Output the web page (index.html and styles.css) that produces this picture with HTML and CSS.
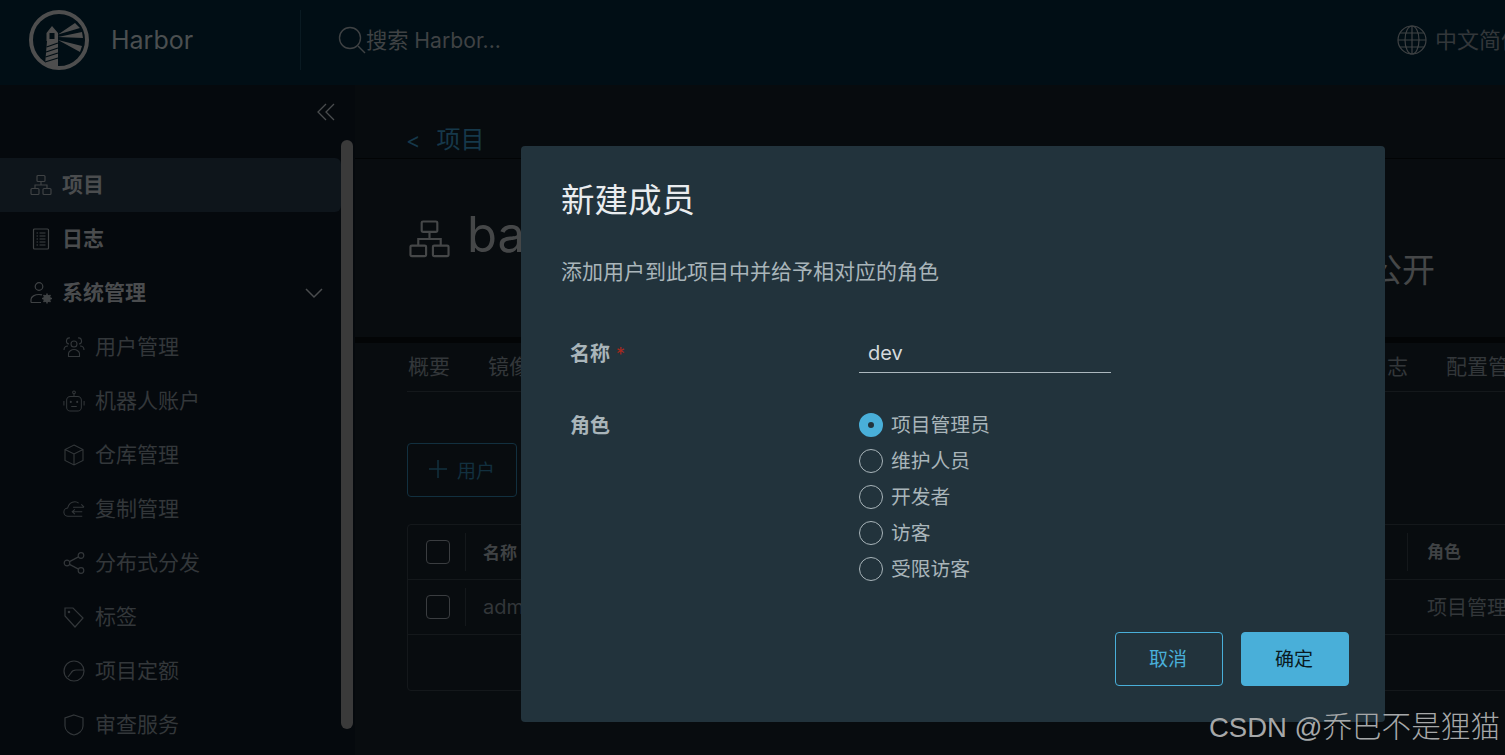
FILE: index.html
```html
<!DOCTYPE html>
<html lang="zh-CN">
<head>
<meta charset="utf-8">
<title>Harbor</title>
<link rel="stylesheet" href="styles.css">
</head>
<body>
<div class="app">
  <header class="topbar">
    <svg class="logo" viewBox="0 0 60 60" fill="none">
      <circle cx="30" cy="30" r="28" stroke="#4e4e4e" stroke-width="4"/>
      <path d="M16 55l2-24h-.500v-8L23 16l6 7v34z" fill="#4e4e4e"/>
      <path d="M20.500 23h5v6h-5z" fill="#010d13"/>
      <path d="M17.500 37L29 33M17 42l12-4M16.500 47l12.500-4M16 52l13-4" stroke="#010d13" stroke-width="1.300"/>
      <path d="M29 24.500L46 13l5 5zM29 27l24-5 1 6zM29 30l24 6-2 6z" fill="#4e4e4e"/>
    </svg>
    <span class="brand">Harbor</span>
    <span class="top-divider"></span>
    <svg class="search-icon" viewBox="0 0 28 28" fill="none" stroke="#3f4244" stroke-width="1.400">
      <circle cx="12" cy="12" r="10.500"/><path d="M20 20l7 7"/>
    </svg>
    <span class="search-text">搜索 Harbor...</span>
    <div class="lang">
      <svg class="globe" viewBox="0 0 30 30" fill="none" stroke="#3f4244" stroke-width="1.200">
        <circle cx="15" cy="15" r="14"/><ellipse cx="15" cy="15" rx="7" ry="14"/><path d="M15 1v28M3 8h24M1 15h28M3 22h24"/>
      </svg>
      <span>中文简体</span>
    </div>
  </header>
  <div class="body">
    <aside class="sidebar">
      <div class="collapse">
        <svg class="collapse-icon" viewBox="0 0 18 18" fill="none" stroke="#4a4c4e" stroke-width="1.300">
          <path d="M9 1L1 9l8 8M17 1L9 9l8 8"/>
        </svg>
      </div>
      <nav class="nav">
        <a class="nav-item main-item active">
          <svg class="icon" viewBox="0 0 22 22" fill="none" stroke="currentColor" stroke-width="1.200"><rect x="7" y="1.500" width="8" height="6" rx="1"/><rect x="1" y="14.500" width="8" height="6" rx="1"/><rect x="13" y="14.500" width="8" height="6" rx="1"/><path d="M11 7.500v3.500M5 14.500V11h12v3.500"/></svg>
          <span>项目</span>
        </a>
        <a class="nav-item main-item">
          <svg class="icon" viewBox="0 0 22 22" fill="none" stroke="currentColor" stroke-width="1.200"><rect x="3.500" y="1" width="15" height="20" rx="1"/><path d="M6.500 5h1.500M9.500 5h6M6.500 8h1.500M9.500 8h6M6.500 11h1.500M9.500 11h6M6.500 14h1.500M9.500 14h6M6.500 17h1.500M9.500 17h6"/></svg>
          <span>日志</span>
        </a>
        <a class="nav-item main-item">
          <svg class="icon" viewBox="0 0 22 22" fill="none" stroke="currentColor" stroke-width="1.200"><circle cx="9" cy="4.500" r="3.800"/><path d="M1 20.500v-3c0-3 4-5 8-5 1 0 2 0 3 .4M1 20.500h10"/><circle cx="17" cy="16.500" r="2.500" stroke-width="2.600"/><path d="M17 11.500v10M12 16.500h10M13.500 13l7 7M20.500 13l-7 7" stroke-width="1.500"/></svg>
          <span>系统管理</span>
          <svg class="chevron" viewBox="0 0 18 12" fill="none" stroke="#4a4c4e" stroke-width="1.500"><path d="M1 2l8 8 8-8"/></svg>
        </a>
        <a class="nav-item sub-item">
          <svg class="icon" viewBox="0 0 22 22" fill="none" stroke="currentColor" stroke-width="1.100"><circle cx="11" cy="8" r="3"/><path d="M5.500 20.500v-3c0-2 3-4 5.500-4s5.500 2 5.500 4v3z"/><path d="M6 8a3 3 0 1 1 1-6M16 8a3 3 0 1 0-1-6M1 14c0-2 1-4 4-4M21 14c0-2-1-4-4-4"/></svg>
          <span>用户管理</span>
        </a>
        <a class="nav-item sub-item">
          <svg class="icon" viewBox="0 0 24 24" fill="none" stroke="currentColor" stroke-width="1.100"><rect x="4" y="7" width="16" height="16" rx="4"/><circle cx="12" cy="2.500" r="1.500"/><path d="M12 4v3M9 18h6M1 12v5M23 12v5"/><circle cx="8.500" cy="13" r=".6"/><circle cx="15.500" cy="13" r=".6"/></svg>
          <span>机器人账户</span>
        </a>
        <a class="nav-item sub-item">
          <svg class="icon" viewBox="0 0 22 22" fill="none" stroke="currentColor" stroke-width="1.100"><path d="M11 1l9 4.500v11L11 21l-9-4.500v-11zM2 5.500l9 4.500 9-4.500M11 10v11"/></svg>
          <span>仓库管理</span>
        </a>
        <a class="nav-item sub-item">
          <svg class="icon" viewBox="0 0 24 22" fill="none" stroke="currentColor" stroke-width="1.100"><path d="M21 19H6a4.500 4.500 0 0 1-1-9c1-4 4-7 8-7 2 0 3 .5 4 1.500M11 9h12M20 6l3 3M10 14h11M13 11.500L10 14l3 2.500"/></svg>
          <span>复制管理</span>
        </a>
        <a class="nav-item sub-item">
          <svg class="icon" viewBox="0 0 22 22" fill="none" stroke="currentColor" stroke-width="1.200"><circle cx="4" cy="11" r="2.800"/><circle cx="18" cy="3.500" r="2.800"/><circle cx="18" cy="18.500" r="2.800"/><path d="M6.500 9.600l9-4.700M6.500 12.400l9 4.700"/></svg>
          <span>分布式分发</span>
        </a>
        <a class="nav-item sub-item">
          <svg class="icon" viewBox="0 0 22 22" fill="none" stroke="currentColor" stroke-width="1.200"><path d="M2 2h8l10 10-8 9L2 10z"/><circle cx="6" cy="6" r=".7"/></svg>
          <span>标签</span>
        </a>
        <a class="nav-item sub-item">
          <svg class="icon" viewBox="0 0 22 22" fill="none" stroke="currentColor" stroke-width="1.200"><circle cx="11" cy="11" r="10"/><path d="M21 10h-8c-3 0-4 1-5 3l-3 4"/></svg>
          <span>项目定额</span>
        </a>
        <a class="nav-item sub-item">
          <svg class="icon" viewBox="0 0 22 22" fill="none" stroke="currentColor" stroke-width="1.200"><path d="M11 1l9 3v8c0 5-5 8-9 9-4-1-9-4-9-9V4z"/></svg>
          <span>审查服务</span>
        </a>
      </nav>
      <div class="scrollbar"></div>
    </aside>
    <main class="main">
      <div class="crumb"><span class="crumb-arrow">&lt;</span><span>项目</span></div>
      <section class="card">
        <div class="project-title">
          <svg class="project-icon" viewBox="0 0 42 40" preserveAspectRatio="none" fill="none" stroke="#454748" stroke-width="2.200"><rect x="13" y="1.500" width="16" height="11" rx="1.500"/><rect x="1.500" y="27" width="16" height="11" rx="1.500"/><rect x="24.500" y="27" width="16" height="11" rx="1.500"/><path d="M21 12.500V20M9.500 27v-7h23v7"/></svg>
          <span>ba</span>
        </div>
        <span class="visibility">公开</span>
      </section>
      <div class="tabs-band">
        <div class="tabs">
          <span>概要</span><span>镜像仓库</span><span class="tab-push">日志</span><span>配置管理</span>
        </div>
        <button class="add-btn" type="button">
          <svg class="plus" viewBox="0 0 18 18" fill="none" stroke="#12303f" stroke-width="1.500"><path d="M9 0v18M0 9h18"/></svg>
          <span>用户</span>
        </button>
        <div class="table">
          <div class="row head-row">
            <span class="check-cell"><i class="check"></i></span>
            <strong class="name-cell">名称</strong>
            <strong class="role-cell">角色</strong>
          </div>
          <div class="row body-row">
            <span class="check-cell"><i class="check"></i></span>
            <span class="name-cell">admin</span>
            <span class="role-cell plain">项目管理员</span>
          </div>
          <div class="table-foot"></div>
        </div>
      </div>
    </main>
  </div>
</div>

<div class="modal">
  <h2 class="modal-title">新建成员</h2>
  <p class="modal-desc">添加用户到此项目中并给予相对应的角色</p>
  <div class="form-row name-row">
    <label class="form-label">名称<em class="required">*</em></label>
    <div class="text-input">dev</div>
  </div>
  <div class="form-row role-row">
    <label class="form-label">角色</label>
    <div class="radios">
      <div class="radio-line"><i class="radio checked"></i><span>项目管理员</span></div>
      <div class="radio-line"><i class="radio"></i><span>维护人员</span></div>
      <div class="radio-line"><i class="radio"></i><span>开发者</span></div>
      <div class="radio-line"><i class="radio"></i><span>访客</span></div>
      <div class="radio-line"><i class="radio"></i><span>受限访客</span></div>
    </div>
  </div>
  <div class="modal-actions">
    <button class="btn btn-outline" type="button"><span>取消</span></button>
    <button class="btn btn-primary" type="button"><span>确定</span></button>
  </div>
</div>
<div class="watermark">CSDN @<span class="watermark-cjk">乔巴不是狸猫</span></div>
</body>
</html>
```
FILE: styles.css
```css
* { box-sizing: border-box; }
html, body { margin: 0; height: 100%; overflow: hidden; }
body {
  background: #05090d;
  font-family: Inter, "Noto Sans CJK SC", sans-serif;
  position: relative;
}
.app { height: 755px; display: flex; flex-direction: column; }

.topbar {
  height: 85px;
  flex: none;
  background: #010e15;
  display: flex;
  align-items: center;
  padding: 0 0 5px 29px;
  overflow: hidden;
}
.logo { width: 60px; height: 60px; flex: none; }
.brand { margin-left: 22px; width: 189px; flex: none; font-size: 25px; color: #4b4f50; }
.top-divider { width: 1px; height: 60px; background: #0a1a22; flex: none; }
.search-icon { width: 28px; height: 28px; margin-left: 37px; flex: none; }
.search-text { font-size: 21.200px; line-height: 28px; color: #3f4244; white-space: nowrap; margin-top: -1px; }
.lang { margin-left: auto; margin-right: -18px; display: flex; align-items: center; gap: 8px; flex: none; font-size: 22px; color: #33373a; }
.lang span { margin-bottom: 4px; }
.globe { width: 30px; height: 30px; }

.body { flex: 1; display: flex; min-height: 0; }
.sidebar { width: 355px; flex: none; background: #05090d; position: relative; padding-right: 14px; }
.collapse { height: 73px; display: flex; justify-content: flex-end; padding: 18px 6px 0 0; }
.collapse-icon { width: 18px; height: 18px; }
.nav { display: flex; flex-direction: column; }
.nav-item { height: 54px; display: flex; align-items: center; gap: 10px; font-size: 21px; }
.nav-item span { margin-bottom: 4px; }
.main-item { padding-left: 30px; color: #4a4c4e; font-weight: 700; }
.sub-item { padding-left: 63px; color: #33373a; }
.active { background: #0e151b; border-radius: 0 6px 6px 0; }
.icon { width: 22px; height: 22px; flex: none; }
.main-item .icon { color: #3f4244; }
.chevron { width: 18px; height: 12px; margin-left: auto; margin-right: 18px; }
.scrollbar { position: absolute; left: 341px; top: 55px; width: 12px; height: 589px; border-radius: 6px; background: #3a3a3a; }

.main { flex: 1; min-width: 0; overflow: hidden; background: #070b0e; }
.crumb { height: 73px; padding: 39px 0 0 53px; display: flex; gap: 15px; font-size: 24px; line-height: 32px; color: #16384a; align-items: flex-start; }
.crumb-arrow { font-size: 22px; margin-left: -2px; padding-right: 1px; }
.card {
  height: 179px;
  border-top: 1px solid #020405;
  background: #080c0f;
  padding: 0 70px 0 55px;
  display: flex;
  align-items: flex-start;
  justify-content: space-between;
}
.project-title { display: flex; align-items: center; gap: 17px; margin-top: 46px; font-size: 49px; line-height: 60px; color: #454748; }
.project-icon { width: 41px; height: 38px; margin-top: 8px; margin-left: -1px; }
.visibility { font-size: 33px; line-height: 44px; margin-top: 89px; color: #454748; }
.tabs-band { margin-top: 6px; padding-left: 52px; background: #080c0f; height: 500px; position: relative; }
.tabs-band::before { content: ""; position: absolute; left: 0; right: 0; top: -6px; height: 6px; background: #030506; }
.tabs { width: 1123px; height: 49px; display: flex; gap: 38px; align-items: center; border-bottom: 1px solid #14181b; font-size: 21px; color: #33373a; white-space: nowrap; padding: 0 0 4px 1px; }
.tab-push { margin-left: auto; }
.add-btn {
  display: flex; align-items: center; gap: 10px;
  width: 110px; height: 54px; margin-top: 51px; padding: 0 0 2px 21px;
  background: transparent; border: 1px solid #12303f; border-radius: 4px;
  font: inherit; font-size: 19px; color: #12303f;
}
.plus { width: 18px; height: 18px; }
.table { width: 1123px; margin-top: 27px; border: 1px solid #14181b; border-radius: 4px; }
.row { height: 55px; display: grid; grid-template-columns: 58px 1fr 122px; align-items: center; border-bottom: 1px solid #14181b; font-size: 20px; color: #33373a; }
.head-row { font-size: 17px; color: #3f4244; }
.check-cell { display: flex; align-items: center; height: 38px; padding-left: 18px; border-right: 1px solid #14181b; }
.check { width: 24px; height: 24px; display: block; border: 1px solid #3a3d40; border-radius: 4px; }
.name-cell { padding-left: 17px; margin-top: -2px; }
.role-cell { height: 38px; display: flex; align-items: center; padding: 0 0 3px 19px; border-left: 1px solid #14181b; white-space: nowrap; }
.role-cell.plain { border-left-color: transparent; }
.body-row .name-cell { margin-top: 0; }
.body-row .role-cell { padding-bottom: 1px; }
.table-foot { height: 55px; }

.modal {
  position: absolute; left: 521px; top: 146px; width: 864px; height: 576px;
  background: #22333c; border-radius: 4px;
  padding: 32px 36px 36px 40px;
  display: flex; flex-direction: column;
}
.modal-title { margin: 0; font-size: 33.500px; line-height: 44px; font-weight: 400; color: #e9ecef; }
.modal-desc { margin: 36px 0 0; font-size: 21px; line-height: 28px; color: #a9b5ba; }
.form-row { display: flex; }
.name-row { margin-top: 47px; height: 40px; align-items: center; }
.role-row { margin-top: 34px; }
.form-label { width: 298px; flex: none; padding: 1px 0 0 9px; font-size: 20px; line-height: 36px; font-weight: 700; color: #a9b5ba; }
.name-row .form-label { padding-top: 3px; }
.required { margin-left: 6px; font-style: normal; font-weight: 400; font-size: 18px; color: #a8281c; }
.text-input { width: 252px; height: 40px; padding: 1px 0 0 9px; line-height: 39px; font-size: 20px; color: #d5dadd; border-bottom: 1px solid #acb8be; }
.radios { display: flex; flex-direction: column; }
.radio-line { height: 36px; display: flex; align-items: center; gap: 8px; font-size: 19.800px; color: #a9b5ba; }
.radio-line span { margin-bottom: 4px; }
.radio { width: 24px; height: 24px; display: block; border: 1px solid #a9b5ba; border-radius: 50%; }
.radio.checked { border: 9px solid #49afd9; background: #22333c; }
.modal-actions { margin-top: auto; display: flex; justify-content: flex-end; gap: 18px; }
.btn { width: 108px; height: 54px; border-radius: 4px; font: inherit; font-size: 19px; padding: 0 2px 3px 0; }
.btn-outline { background: transparent; border: 1px solid #49afd9; color: #49afd9; }
.btn-primary { background: #49afd9; border: 1px solid #49afd9; color: #0a1a22; }
.watermark {
  position: absolute; right: 5px; top: 708px;
  font-family: "Liberation Sans", "Noto Sans CJK SC", sans-serif;
  font-size: 27.500px; line-height: 38px; color: #a6a8a9; white-space: nowrap;
}
.watermark-cjk { font-size: 29.600px; font-weight: 300; }
```
